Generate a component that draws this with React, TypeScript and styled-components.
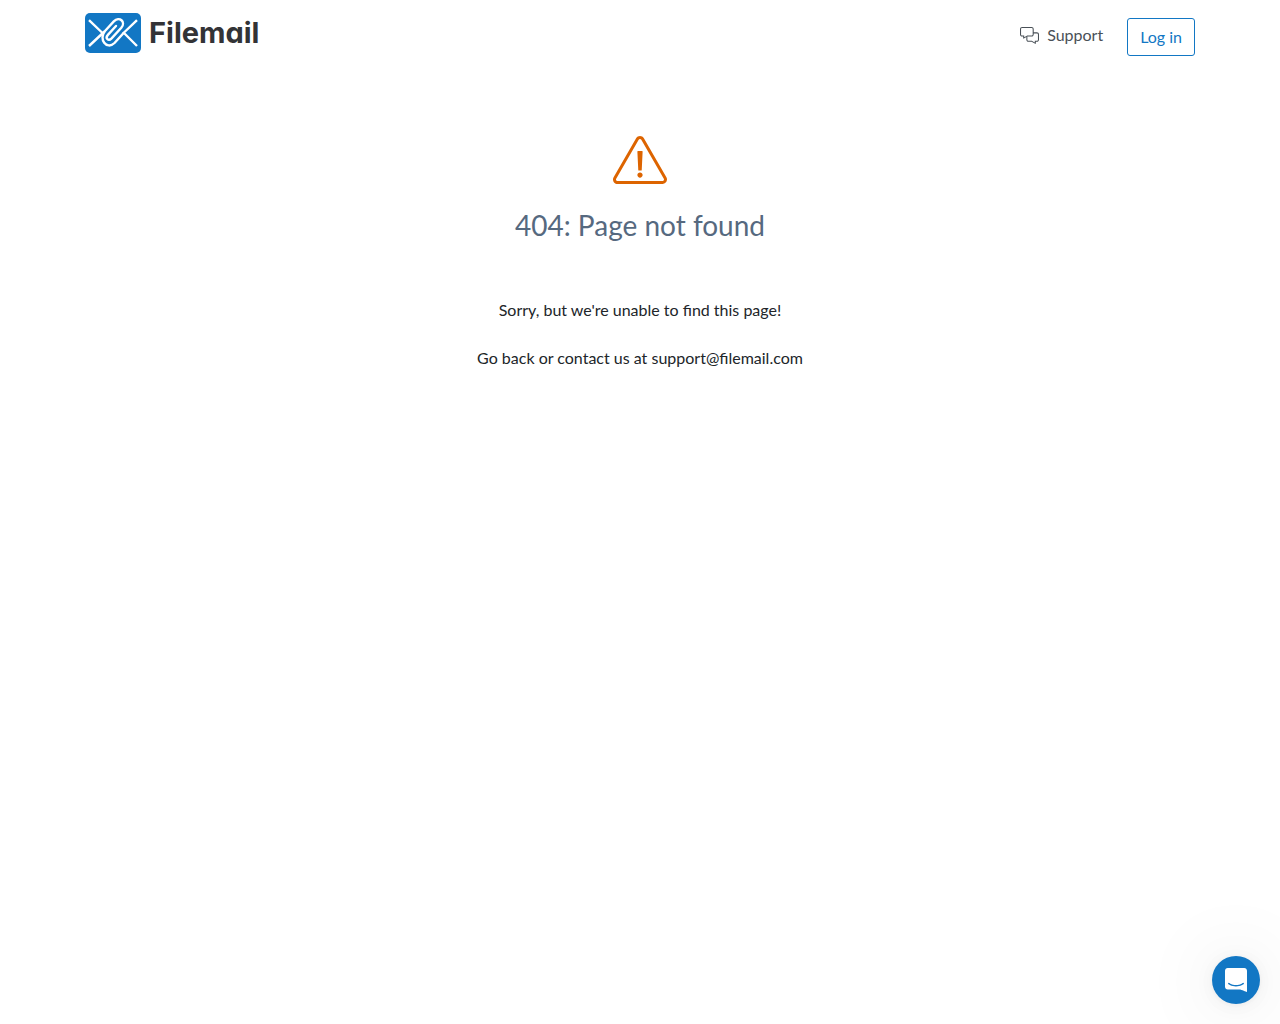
import React from "react";
import styled, { createGlobalStyle } from "styled-components";

const GlobalStyle = createGlobalStyle`
  *, *::before, *::after { box-sizing: border-box; }
  body {
    margin: 0;
    background: #fff;
    color: #212529;
    font: 400 16px/24px Lato, "Liberation Sans", sans-serif;
  }
`;

const Container = styled.div`
  width: 100%;
  max-width: 1140px;
  margin: 0 auto;
  padding: 0 15px;
`;

const HeaderRow = styled(Container)`
  display: flex;
  align-items: flex-start;
  justify-content: space-between;
  padding-top: 13px;
`;

const Brand = styled.a`
  display: flex;
  align-items: center;
  gap: 8px;
  height: 40px;
  color: #333336;
  font: 700 29px/40px Inter, "Liberation Sans", sans-serif;
  font-feature-settings: "cv11";
  text-decoration: none;
`;

const Nav = styled.nav`
  display: flex;
  align-items: flex-start;
  gap: 24px;
  padding-top: 5px;
`;

const SupportLink = styled.a`
  display: flex;
  align-items: center;
  gap: 8px;
  padding: 5px 0;
  color: #495057;
  text-decoration: none;
`;

const LoginButton = styled.button`
  padding: 6px 12px;
  border: 1px solid #1277c4;
  border-radius: 3px;
  background: #fff;
  color: #1277c4;
  font: inherit;
  cursor: pointer;
`;

const Message = styled.main`
  display: flex;
  flex-direction: column;
  align-items: center;
  padding: 80px 15px 0;
  text-align: center;
`;

const Title = styled.h1`
  margin: 24px 0 56px;
  color: #56697f;
  font-size: 28px;
  font-weight: 400;
  line-height: 34px;
`;

const Paragraph = styled.p`
  margin: 0 0 24px;
`;

const MailLink = styled.a`
  color: inherit;
  text-decoration: none;
`;

const Launcher = styled.button`
  position: fixed;
  right: 20px;
  bottom: 20px;
  display: flex;
  align-items: center;
  justify-content: center;
  width: 48px;
  height: 48px;
  padding: 0;
  border: 0;
  border-radius: 50%;
  background: #1277c4;
  box-shadow: 0 1px 6px rgba(0, 0, 0, 0.06), 0 2px 32px rgba(0, 0, 0, 0.06),
    0 2px 80px rgba(0, 0, 0, 0.12);
  cursor: pointer;
`;

const LogoMark = () => (
  <svg width="56" height="40" viewBox="0 0 56 40" aria-hidden="true">
    <rect width="56" height="40" rx="5" fill="#1277c4" />
    <g fill="none" stroke="#fff" strokeWidth="2.4">
      <path d="M4 7.2 L18 20.5 M4 33 L19.5 18.5 M52 7.2 L38 20.5 M52 33 L38.5 19.5" />
      <path
        strokeLinecap="round"
        d="M31 13 L22.9 21.9 C19.8 25.4 23.4 28.6 26.6 25.4 L36.3 14.8 C41.2 8.9 34.4 2.7 28.8 8.4 L20 18 C13.2 25.7 21.6 37.6 29.5 30 L38.6 20"
      />
    </g>
  </svg>
);

const CommentsIcon = () => (
  <svg width="19" height="17" viewBox="0 0 576 512" fill="currentColor" aria-hidden="true">
    <path d="M512 160h-96V64c0-35.3-28.7-64-64-64H64C28.7 0 0 28.7 0 64v160c0 35.3 28.7 64 64 64h32v52c0 7.1 5.8 12 12 12 2.4 0 4.9-.7 7.1-2.4L224 288h128c35.3 0 64-28.7 64-64v-32h96c17.6 0 32 14.4 32 32v160c0 17.6-14.4 32-32 32h-64v49.6l-80.2-45.4-7.3-4.2H256c-17.6 0-32-14.4-32-32v-96l-32 18.1V384c0 35.3 28.7 64 64 64h96l108.9 61.6c2.2 1.6 4.7 2.4 7.1 2.4 6.2 0 12-4.9 12-12v-52h32c35.3 0 64-28.7 64-64V224c0-35.3-28.7-64-64-64zm-128 64c0 17.6-14.4 32-32 32H215.6l-7.3 4.2-80.3 45.4V256H64c-17.6 0-32-14.4-32-32V64c0-17.6 14.4-32 32-32h288c17.6 0 32 14.4 32 32v160z" />
  </svg>
);

const WarningIcon = () => (
  <svg width="54" height="48" viewBox="0 0 576 512" fill="#dd6400" aria-hidden="true">
    <path d="M266 160h44c3.4 0 6.1 2.8 6 6.2l-9.5 196c-.1 3.2-2.8 5.8-6 5.8h-25c-3.2 0-5.9-2.5-6-5.8l-9.5-196c-.1-3.4 2.6-6.2 6-6.2zM288 388c-15.5 0-28 12.5-28 28s12.5 28 28 28 28-12.5 28-28-12.5-28-28-28zm281.5 52L329.6 24c-18.4-32-64.7-32-83.2 0L6.5 440c-18.4 31.9 4.6 72 41.6 72H528c36.8 0 60-40 41.5-72zM528 480H48c-12.3 0-20-13.3-13.9-24l240-416c6.1-10.6 21.6-10.7 27.7 0l240 416c6.2 10.6-1.5 24-13.8 24z" />
  </svg>
);

const ChatIcon = () => (
  <svg width="22" height="24" viewBox="0 0 28 32" preserveAspectRatio="none" fill="#fff" aria-hidden="true">
    <path d="M28 32s-4.714-1.855-8.527-3.34H3.437C1.54 28.66 0 27.026 0 25.013V3.644C0 1.633 1.54 0 3.437 0h21.125c1.898 0 3.437 1.632 3.437 3.645v18.404H28V32zm-4.139-11.982a.88.88 0 00-1.292-.105c-.03.026-3.015 2.681-8.57 2.681-5.486 0-8.517-2.636-8.571-2.684a.88.88 0 00-1.29.107 1.01 1.01 0 00-.219.708.992.992 0 00.318.664c.142.128 3.537 3.15 9.762 3.15 6.226 0 9.621-3.022 9.763-3.15a.992.992 0 00.317-.664 1.01 1.01 0 00-.218-.707z" />
  </svg>
);

export default function App() {
  return (
    <>
      <GlobalStyle />
      <header>
        <HeaderRow>
          <Brand href="/">
            <LogoMark />
            Filemail
          </Brand>
          <Nav>
            <SupportLink href="/support">
              <CommentsIcon />
              Support
            </SupportLink>
            <LoginButton type="button">Log in</LoginButton>
          </Nav>
        </HeaderRow>
      </header>
      <Message>
        <WarningIcon />
        <Title>404: Page not found</Title>
        <Paragraph>Sorry, but we're unable to find this page!</Paragraph>
        <Paragraph>
          Go back or contact us at{" "}
          <MailLink href="mailto:support@filemail.com">support@filemail.com</MailLink>
        </Paragraph>
      </Message>
      <Launcher type="button" aria-label="Open chat">
        <ChatIcon />
      </Launcher>
    </>
  );
}
